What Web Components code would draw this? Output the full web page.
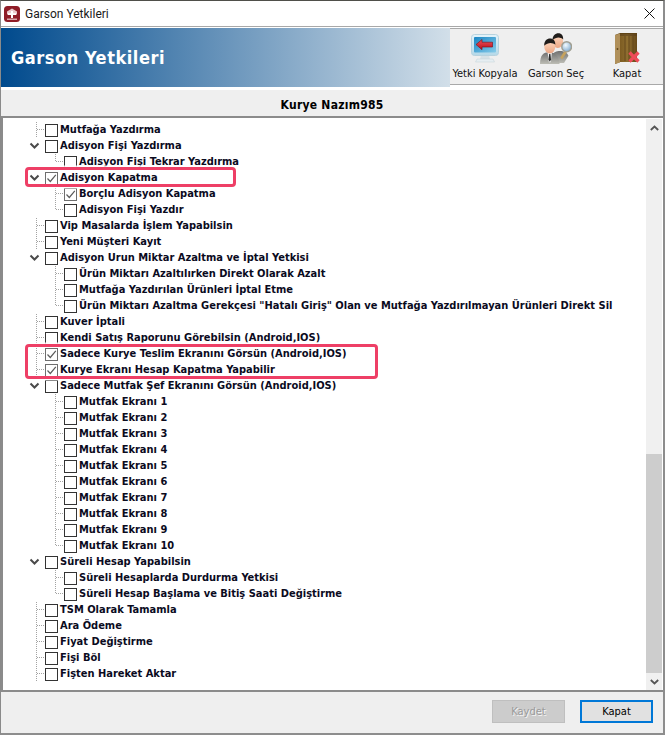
<!doctype html>
<html lang="tr">
<head>
<meta charset="utf-8">
<title>Garson Yetkileri</title>
<style>
  html,body{ margin:0; padding:0; background:#fff; }
  body{ font-family:"DejaVu Sans Condensed","DejaVu Sans",sans-serif; overflow:hidden; }
</style>
</head>
<body>
<!-- icons live in the elements, rows are built from the PERMS list at the bottom -->
<yetki-window>
  <yetki-titlebar slot="title">Garson Yetkileri</yetki-titlebar>
  <yetki-header slot="header" heading="Garson Yetkileri">
    <tool-button icon="copy">Yetki Kopyala</tool-button>
    <tool-button icon="find">Garson Seç</tool-button>
    <tool-button icon="door">Kapat</tool-button>
  </yetki-header>
  <yetki-strip slot="strip">Kurye Nazım985</yetki-strip>
  <perm-tree slot="tree"></perm-tree>
  <yetki-footer slot="footer">
    <win-button disabled>Kaydet</win-button>
    <win-button focused>Kapat</win-button>
  </yetki-footer>
</yetki-window>

<script>
(function(){
  var FONT = '"DejaVu Sans Condensed","DejaVu Sans",sans-serif';

  var ICONS = {
    copy:
      '<svg width="28" height="29" viewBox="0 0 28 29"><defs>'+
      '<linearGradient id="sc" x1="0" y1="0" x2="0" y2="1"><stop offset="0" stop-color="#e3f3fa"/><stop offset="1" stop-color="#b4d8e8"/></linearGradient>'+
      '<linearGradient id="gl" x1="0" y1="0" x2="1" y2="1"><stop offset="0" stop-color="#1a86c4"/><stop offset="1" stop-color="#86cbe9"/></linearGradient>'+
      '<linearGradient id="ar" x1="0" y1="0" x2="0" y2="1"><stop offset="0" stop-color="#f2505a"/><stop offset="1" stop-color="#b5101c"/></linearGradient></defs>'+
      '<path d="M10 21h8l1 4.500H9z" fill="#d6e1e6"/><path d="M6 25h16l1.500 3H4.500z" fill="#e6eef2" stroke="#c3d0d6" stroke-width=".5"/>'+
      '<rect x=".5" y=".5" width="27" height="21" rx="3" fill="url(#sc)" stroke="#b7d2de"/>'+
      '<rect x="3" y="3" width="22" height="15.500" rx="1" fill="url(#gl)"/>'+
      '<path d="M5 10.500 11 5.500v2.700h10.500v4.800H11v2.700z" fill="url(#ar)" stroke="#7e0a12" stroke-width=".6"/></svg>',
    find:
      '<svg width="32" height="31" viewBox="0 0 36 34" preserveAspectRatio="none"><defs>'+
      '<linearGradient id="sk" x1="0" y1="0" x2="0" y2="1"><stop offset="0" stop-color="#ffdcc4"/><stop offset="1" stop-color="#eba582"/></linearGradient>'+
      '<linearGradient id="su" x1="0" y1="0" x2="0" y2="1"><stop offset="0" stop-color="#6f6f6f"/><stop offset="1" stop-color="#bdbdb5"/></linearGradient>'+
      '<radialGradient id="ln" cx=".4" cy=".35" r=".7"><stop offset="0" stop-color="#f4fbff"/><stop offset="1" stop-color="#7ea9cf"/></radialGradient></defs>'+
      '<path d="M14 24c2-6 16-6 18 1l-5 8H17z" fill="url(#su)"/>'+
      '<ellipse cx="20" cy="9" rx="6" ry="7.500" fill="url(#sk)"/><path d="M14 8c0-10 13-10 12-1-3-3-8-3-12 1z" fill="#1f1c1a"/>'+
      '<path d="M24 28 29 20" stroke="#c6a25d" stroke-width="3"/>'+
      '<circle cx="30" cy="15" r="5.500" fill="url(#ln)" stroke="#a19f92" stroke-width="1.600"/>'+
      '<path d="M0 34c0-10 4-13 10-13s11 3 12 13z" fill="url(#su)"/>'+
      '<path d="M8.500 21h5l-1.500 11h-2z" fill="#f1f1f1"/><path d="M10.300 23h1.400l.7 6-1.400 2.500-1.400-2.500z" fill="#2c2c2c"/>'+
      '<ellipse cx="11" cy="15" rx="6.200" ry="7.500" fill="url(#sk)"/><path d="M4.800 14c-1-10 13-11 12.500-1-3-3-8.500-3-12.500 1z" fill="#1f1c1a"/></svg>',
    door:
      '<svg width="25" height="31" viewBox="0 0 25 31"><defs>'+
      '<linearGradient id="dr" x1="0" y1="0" x2="1" y2="0"><stop offset="0" stop-color="#7d5c22"/><stop offset=".45" stop-color="#8f6f30"/><stop offset="1" stop-color="#664919"/></linearGradient></defs>'+
      '<path d="M0 2 5 0h17v29H5l-5 2z" fill="#5f4417"/>'+
      '<path d="M0 2 5 .5v29L0 31z" fill="#b0905a"/>'+
      '<rect x="5" y="1" width="17" height="28" fill="url(#dr)"/>'+
      '<path d="M5 1h17v2H5z" fill="#54391a" opacity=".5"/>'+
      '<path d="M10 3v25M14 3v25M18 3v25" stroke="#5e4319" stroke-width=".8"/><circle cx="2.500" cy="16" r=".9" fill="#5e4418"/>'+
      '<path d="M14.500 19.500l9 9M23.500 19.500l-9 9" stroke="#ef4b58" stroke-width="3.200"/></svg>'
  };

  class YetkiWindow extends HTMLElement{
    connectedCallback(){
      this.attachShadow({mode:'open'}).innerHTML =
        '<style>:host{display:flex;flex-direction:column;width:665px;height:735px;box-sizing:border-box;background:#efefef;'+
        'border-top:1px solid #4f4f4a;border-left:1px solid #8a8a8a;border-bottom:2px solid #8d8d8d;border-right:2px solid #8d8d8d;font-family:'+FONT+';}'+
        '</style><slot name="title"></slot><slot name="header"></slot><slot name="strip"></slot><slot name="tree"></slot><slot name="footer"></slot>';
    }
  }

  class YetkiTitlebar extends HTMLElement{
    connectedCallback(){
      this.attachShadow({mode:'open'}).innerHTML =
        '<style>:host{display:flex;align-items:center;height:25px;background:#fff;border-bottom:1px solid #a8a8a8;padding-left:3px;'+
        'font:12px Roboto,sans-serif;color:#1a1a1a;}'+
        '.app{width:16px;height:16px;margin-right:5px;flex:none;}'+
        '.x{margin-left:auto;margin-right:8px;}</style>'+
        '<svg class="app" viewBox="0 0 16 16"><rect width="16" height="16" rx="3.500" fill="#8f1d27"/><path d="M3 5.500 8 2.500l5 3v3H3z" fill="#e9c9cb"/><path d="M7 5h2v2.200h3v1.800H9v3H7V9H4V7.200h3z" fill="#fff"/><rect x="3" y="12.500" width="10" height="1.500" fill="#d9a6aa"/></svg>'+
        '<slot></slot>'+
        '<svg class="x" width="11" height="11" viewBox="0 0 11 11"><path d="M.5.500l10 10M10.500.500l-10 10" stroke="#111" stroke-width="1" fill="none"/></svg>';
    }
  }

  class YetkiHeader extends HTMLElement{
    connectedCallback(){
      var h = this.getAttribute('heading');
      this.attachShadow({mode:'open'}).innerHTML =
        '<style>:host{display:flex;height:61px;flex:none;background:#fff;padding-bottom:2px;}'+
        '.band{width:449px;flex:none;height:59px;margin-top:1px;display:flex;align-items:center;box-sizing:border-box;padding-left:10px;'+
        'background:linear-gradient(90deg,#004a8d 0%,#d2dfe9 100%);color:#fff;font:bold 18px '+FONT+';letter-spacing:.55px;}'+
        '.tools{flex:1;display:flex;height:57px;margin-top:1px;background:#efefef;border-top:1px solid #a9a9a9;border-bottom:1px solid #a9a9a9;box-sizing:border-box;}</style>'+
        '<div class="band">'+h+'</div><div class="tools"><slot></slot></div>';
    }
  }

  class ToolButton extends HTMLElement{
    connectedCallback(){
      this.attachShadow({mode:'open'}).innerHTML =
        '<style>:host{display:flex;flex-direction:column;align-items:center;height:50px;padding-top:4px;'+
        'font:11px '+FONT+';color:#111;white-space:nowrap;}'+
        ':host([icon=copy]){width:70px;} :host([icon=find]){width:72px;} :host([icon=door]){width:70px;}'+
        '.i{height:31px;display:flex;align-items:center;} span{line-height:14px;margin-top:3px;}</style>'+
        '<div class="i">'+ICONS[this.getAttribute('icon')]+'</div><span><slot></slot></span>';
    }
  }

  class YetkiStrip extends HTMLElement{
    connectedCallback(){
      this.attachShadow({mode:'open'}).innerHTML =
        '<style>:host{display:flex;align-items:center;justify-content:center;height:28px;flex:none;background:#efefef;'+
        'font:bold 12px '+FONT+';color:#000;box-sizing:border-box;border-bottom:2px solid #8b8b8b;padding-top:3px;letter-spacing:.25px;}</style><slot></slot>';
    }
  }

  // one line of the tree: dotted guides, chevron, box, label
  class PermRow extends HTMLElement{
    connectedCallback(){
      var lvl = +this.getAttribute('level') || 1;
      var open = this.hasAttribute('open');
      var last = this.hasAttribute('last');
      var checked = this.hasAttribute('checked');
      var g = '';
      var dot = 'stroke="#a3a3a3" stroke-width="1" stroke-dasharray="1 1" fill="none"';
      if(lvl===1){
        if(open) g = '<path d="M27.500 5.500 31.500 9.500 35.500 5.500" stroke="#4a4a4a" stroke-width="2" fill="none"/>';
        else g = '<path d="M33.500 0V16M34 7.500H42" '+dot+'/>';
      }else{
        g = '<path d="M52.500 0V'+(last?8:16)+'M53 7.500H61" '+dot+'/>';
      }
      var w = lvl===1 ? 42 : 61;
      this.attachShadow({mode:'open'}).innerHTML =
        '<style>:host{display:flex;align-items:center;height:16px;flex:none;font:bold 11px/16px '+FONT+';color:#0b0b1e;white-space:nowrap;}'+
        '.box{width:13px;height:13px;box-sizing:border-box;border:1px solid '+(checked?'#6e6e6e':'#333')+';background:#fff;flex:none;margin-right:2px;display:block;}'+
        '.g{flex:none;display:block;} </style>'+
        '<svg class="g" width="'+w+'" height="16">'+g+'</svg>'+
        '<svg class="box" viewBox="0 0 11 11">'+(checked?'<path d="M1.500 5.500 4.300 8.500 9.800 1.800" stroke="#5c5c5c" stroke-width="1.200" fill="none"/>':'')+'</svg>'+
        '<slot></slot>';
    }
  }

  class PermScrollbar extends HTMLElement{
    connectedCallback(){
      this.attachShadow({mode:'open'}).innerHTML =
        '<style>:host{display:flex;flex-direction:column;width:16px;flex:none;background:#f0f0f0;}'+
        '.btn{height:17px;display:flex;align-items:center;justify-content:center;flex:none;}'+
        '.track{flex:1;display:flex;flex-direction:column;} .gap{height:318px;flex:none;} .thumb{flex:1;background:#cdcdcd;}</style>'+
        '<div class="btn"><svg width="9" height="6"><path d="M.8 5 4.500 1.500 8.200 5" stroke="#555" stroke-width="1.800" fill="none"/></svg></div>'+
        '<div class="track"><div class="gap"></div><div class="thumb"></div></div>'+
        '<div class="btn"><svg width="9" height="6"><path d="M.8 1 4.500 4.500 8.200 1" stroke="#555" stroke-width="1.800" fill="none"/></svg></div>';
    }
  }

  class PermTree extends HTMLElement{
    connectedCallback(){
      var root = this.attachShadow({mode:'open'});
      root.innerHTML =
        '<style>:host{display:flex;flex:none;position:relative;height:574px;background:#fff;box-sizing:border-box;padding:0 1px 0 0;border-left:2px solid #8b8b8b;border-bottom:2px solid #8b8b8b;overflow:hidden;}'+
        '.rows{flex:1;display:flex;flex-direction:column;min-width:0;overflow:hidden;padding-top:4px;}'+
        'perm-scrollbar{margin-top:1px;}'+
        /* red markers drawn on the screenshot, they lie over the rows */
        '.mark{position:absolute;box-sizing:border-box;border:3px solid #ee3f66;border-radius:4px;box-shadow:0 0 0 1.500px rgba(255,255,255,.85);}'+
        '</style><div class="rows"></div><perm-scrollbar></perm-scrollbar>'+
        '<div class="mark" style="left:22px;top:49px;width:211px;height:20px"></div>'+
        '<div class="mark" style="left:22px;top:226px;width:353px;height:35px"></div>';
      var box = root.querySelector('.rows');
      PERMS.forEach(function(p){
        var r = document.createElement('perm-row');
        r.setAttribute('level', p[1]);
        (p[2]||'').split(' ').forEach(function(a){ if(a) r.setAttribute(a,''); });
        r.textContent = p[0];
        box.appendChild(r);
      });
    }
  }

  class YetkiFooter extends HTMLElement{
    connectedCallback(){
      this.attachShadow({mode:'open'}).innerHTML =
        '<style>:host{display:flex;justify-content:flex-end;align-items:flex-start;gap:15px;flex:1;background:#efefef;padding:8px 10px 0 0;}</style><slot></slot>';
    }
  }

  class WinButton extends HTMLElement{
    connectedCallback(){
      var dis = this.hasAttribute('disabled');
      var foc = this.hasAttribute('focused');
      this.attachShadow({mode:'open'}).innerHTML =
        '<style>:host{display:flex;align-items:center;justify-content:center;width:73px;height:23px;box-sizing:border-box;font:11px '+FONT+';'+
        (dis ? 'background:#cccccc;border:1px solid #bfbfbf;color:#9a9a9a;text-shadow:1px 1px 0 #f4f4f4;'
             : 'background:#e1e1e1;border:'+(foc?'2px solid #0078d7':'1px solid #adadad')+';color:#000;')+
        '}</style><slot></slot>';
    }
  }

  var PERMS = [
    ['Mutfağa Yazdırma',1],
    ['Adisyon Fişi Yazdırma',1,'open'],
    ['Adisyon Fişi Tekrar Yazdırma',2,'last'],
    ['Adisyon Kapatma',1,'open checked'],
    ['Borçlu Adisyon Kapatma',2,'checked'],
    ['Adisyon Fişi Yazdır',2,'last'],
    ['Vip Masalarda İşlem Yapabilsin',1],
    ['Yeni Müşteri Kayıt',1],
    ['Adisyon Urun Miktar Azaltma ve İptal Yetkisi',1,'open'],
    ['Ürün Miktarı Azaltılırken Direkt Olarak Azalt',2],
    ['Mutfağa Yazdırılan Ürünleri İptal Etme',2],
    ['Ürün Miktarı Azaltma Gerekçesi "Hatalı Giriş" Olan ve Mutfağa Yazdırılmayan Ürünleri Direkt Sil',2,'last'],
    ['Kuver İptali',1],
    ['Kendi Satış Raporunu Görebilsin (Android,IOS)',1],
    ['Sadece Kurye Teslim Ekranını Görsün (Android,IOS)',1,'checked'],
    ['Kurye Ekranı Hesap Kapatma Yapabilir',1,'checked'],
    ['Sadece Mutfak Şef Ekranını Görsün (Android,IOS)',1,'open'],
    ['Mutfak Ekranı 1',2],['Mutfak Ekranı 2',2],['Mutfak Ekranı 3',2],['Mutfak Ekranı 4',2],['Mutfak Ekranı 5',2],
    ['Mutfak Ekranı 6',2],['Mutfak Ekranı 7',2],['Mutfak Ekranı 8',2],['Mutfak Ekranı 9',2],['Mutfak Ekranı 10',2,'last'],
    ['Süreli Hesap Yapabilsin',1,'open'],
    ['Süreli Hesaplarda Durdurma Yetkisi',2],
    ['Süreli Hesap Başlama ve Bitiş Saati Değiştirme',2,'last'],
    ['TSM Olarak Tamamla',1],
    ['Ara Ödeme',1],
    ['Fiyat Değiştirme',1],
    ['Fişi Böl',1],
    ['Fişten Hareket Aktar',1]
  ];

  customElements.define('yetki-window', YetkiWindow);
  customElements.define('yetki-titlebar', YetkiTitlebar);
  customElements.define('yetki-header', YetkiHeader);
  customElements.define('tool-button', ToolButton);
  customElements.define('yetki-strip', YetkiStrip);
  customElements.define('perm-row', PermRow);
  customElements.define('perm-scrollbar', PermScrollbar);
  customElements.define('perm-tree', PermTree);
  customElements.define('yetki-footer', YetkiFooter);
  customElements.define('win-button', WinButton);
})();
</script>
</body>
</html>
